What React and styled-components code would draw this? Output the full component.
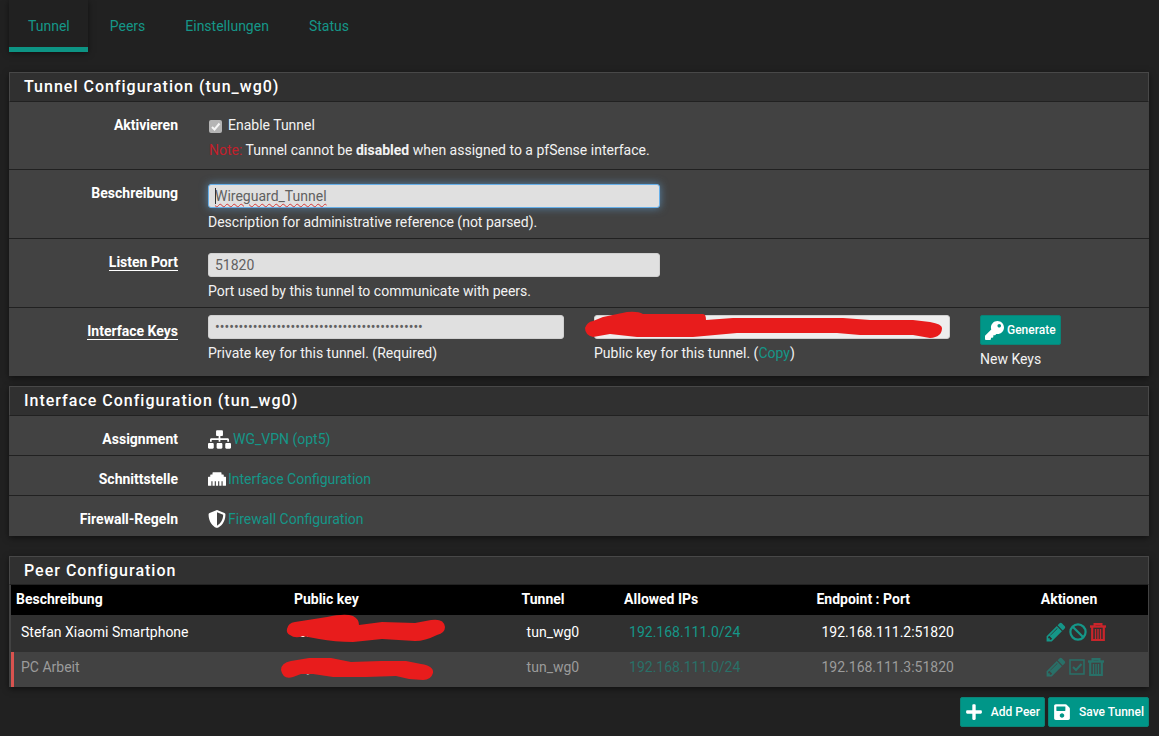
import React, { useState } from 'react';
import styled, { createGlobalStyle } from 'styled-components';
import { FaEthernet, FaKey, FaPlus, FaSave, FaShieldAlt, FaSitemap } from 'react-icons/fa';


const GlobalStyle = createGlobalStyle`
    *{box-sizing: border-box;}

    body{
        margin: 0;
        background: #212121;
        color: #f2f2f2;
        font-family: Roboto, "Liberation Sans", sans-serif;
        font-size: 14px;
        line-height: 20px;
    }

    a{color: #159688; text-decoration: none;}
`

const Page = styled.div`
    padding: 0 10px 0 9px;
`

const Tabs = styled.nav`
    display: flex;
    gap: 3px;
    height: 52px;
    margin-bottom: 20px;
`

const Tab = styled.a`
    display: block;
    padding: 16px 18px 0 19px;
    border-bottom: 5px solid ${(props) => (props.$active ? '#0d9484' : 'transparent')};
    box-shadow: ${(props) => (props.$active ? '0 1px 6px rgba(0, 0, 0, 0.5)' : 'none')};
`

const Panel = styled.section`
    margin-bottom: ${(props) => props.$gap || 10}px;
    background: #424242;
    box-shadow: 0 2px 6px rgba(0, 0, 0, 0.5);
`

const PanelTitle = styled.h2`
    height: ${(props) => props.$height || 30}px;
    margin: 0;
    padding: 4px 14px 0 14px;
    border: 1px solid #484848;
    border-bottom-color: #212121;
    background: #303030;
    color: #ffffff;
    font-size: 16px;
    font-weight: 500;
    line-height: 20px;
    letter-spacing: 1px;
`

const FormRow = styled.div`
    padding: ${(props) => (props.$small ? '9px 0 6px 0' : '7px 0 6px 0')};
    min-height: ${(props) => (props.$small ? 40 : 68)}px;
    border-bottom: 1px solid #212121;

    &:last-child{border-bottom: none;}
`

const Columns = styled.div`
    display: flex;
    align-items: flex-start;
    margin: 0 -9px;
`

const Label = styled.label`
    width: 16.6666%;
    padding: ${(props) => props.$top || 0}px 15px 0 15px;
    color: #ffffff;
    font-weight: 700;
    text-align: right;

    span{border-bottom: ${(props) => (props.$required ? '1px solid #ffffff' : 'none')};}
`

const Field = styled.div`
    width: ${(props) => (props.$cols * 100) / 12}%;
    padding: ${(props) => props.$top || 0}px 15px 0 15px;
`

const TextInput = styled.input`
    display: block;
    width: 100%;
    height: 24px;
    padding: 0 6px;
    border: 1px solid ${(props) => (props.$focus ? '#66afe9' : '#d0d0d0')};
    border-radius: 3px;
    outline: none;
    background: ${(props) => (props.readOnly ? '#eeeeee' : '#e0e0e0')};
    box-shadow: ${(props) => (props.$focus ? '0 0 8px rgba(102, 175, 233, 0.6)' : 'none')};
    color: #616161;
    font-family: inherit;
    font-size: 14px;
`

const Misspelled = styled.div`
    position: relative;

    &::before{
        content: '';
        position: absolute;
        top: 4px;
        left: 7px;
        width: 1px;
        height: 16px;
        background: #333333;
    }

    &::after{
        content: 'Wireguard_Tunnel';
        position: absolute;
        top: 2px;
        left: 7px;
        color: transparent;
        text-decoration: underline wavy #d33a3a 1px;
        text-underline-offset: 2px;
        pointer-events: none;
    }
`

const Help = styled.div`
    padding-top: 4px;
`

const CheckLabel = styled.label`
    display: flex;
    align-items: center;
    gap: 6px;
`

const Checkbox = styled.input`
    appearance: none;
    width: 13px;
    height: 13px;
    margin: 2px 0 0 1px;
    border-radius: 2px;
    background: #b4b4b4 url("data:image/svg+xml,%3Csvg xmlns='http://www.w3.org/2000/svg' viewBox='0 0 13 13'%3E%3Cpath d='M3 7l2.500 2.500L10.500 3.500' fill='none' stroke='%23f4f4f4' stroke-width='2'/%3E%3C/svg%3E");
`

const Note = styled.div`
    padding: 5px 0 0 1px;

    em{color: #c3202b; font-style: normal;}
`

const KeyBox = styled.div`
    position: relative;
`

const Scribble = styled.svg`
    position: absolute;
    top: ${(props) => props.$top}px;
    left: ${(props) => props.$left}px;
    overflow: visible;
    fill: #e81c1c;
    pointer-events: none;
`

const Button = styled.button`
    display: inline-flex;
    align-items: center;
    gap: ${(props) => props.$gap || 3}px;
    height: 30px;
    padding: 0 4px;
    border: 1px solid #0a8477;
    border-radius: 2px;
    background: #009688;
    color: #ffffff;
    font-family: inherit;
    font-size: 12px;
    font-weight: 500;
`

const IconLink = styled.div`
    display: flex;
    align-items: center;
    gap: 2px;
    height: 20px;

    svg{flex: none; color: #ffffff;}
`

const PeerTable = styled.table`
    width: 100%;
    border-collapse: collapse;
    table-layout: fixed;
    border-left: 2px solid #424242;
    border-right: 1px solid #424242;

    th{
        height: 30px;
        padding: 0 5px 2px 5px;
        background: #000000;
        color: #ffffff;
        font-weight: 700;
        text-align: left;
    }

    td{padding: 0 10px;}
`

const PeerRow = styled.tr`
    height: ${(props) => (props.$disabled ? 35 : 37)}px;
    background: ${(props) => (props.$disabled ? '#424242' : '#303030')};
    color: ${(props) => (props.$disabled ? '#9b9b9b' : '#ffffff')};

    td{padding-bottom: ${(props) => (props.$disabled ? 5 : 3)}px;}

    td:first-child{
        box-shadow: ${(props) => (props.$disabled ? 'inset 3px 0 0 #d9534f' : 'none')};
    }

    a, button{opacity: ${(props) => (props.$disabled ? 0.55 : 1)};}
`

const Actions = styled.div`
    display: flex;
    align-items: center;
    gap: 1px;
    height: 20px;
`

const IconButton = styled.button`
    display: flex;
    padding: 0;
    border: none;
    background: none;
    color: ${(props) => (props.$danger ? '#c9252b' : '#159688')};
`

const ButtonBar = styled.div`
    display: flex;
    justify-content: flex-end;
    gap: 3px;
`


const PencilIcon = () => (
    <svg width="21" height="22" viewBox="80 0 1710 1792" fill="currentColor">
        <path d="M491 1536l91-91-235-235-91 91v107h128v128h107zm523-928q0-22-22-22-10 0-17 7l-542 542q-7 7-7 17 0 22 22 22 10 0 17-7l542-542q7-7 7-17zm-54-192l416 416-832 832h-416v-416zm683 96q0 53-37 90l-166 166-416-416 166-165q36-38 90-38 53 0 91 38l235 234q37 39 37 91z" />
    </svg>
)

const BanIcon = () => (
    <svg width="20" height="20" viewBox="0 0 20 20" fill="none" stroke="currentColor" strokeWidth="2.200">
        <circle cx="10" cy="10" r="7.600" />
        <path d="M4.700 4.700l10.600 10.600" />
    </svg>
)

const CheckSquareIcon = () => (
    <svg width="18" height="20" viewBox="0 0 18 20" fill="none" stroke="currentColor">
        <rect x="2" y="3" width="14" height="14" strokeWidth="1.500" />
        <path d="M5 10l3 3 5.500-6" strokeWidth="2" />
    </svg>
)

const TrashIcon = () => (
    <svg width="18" height="20" viewBox="0 0 18 20" fill="none" stroke="currentColor">
        <path d="M1 4.500h16" strokeWidth="2.400" />
        <path d="M5.500 4V2h7v2" strokeWidth="2" />
        <path d="M3.200 5v13h11.600V5" strokeWidth="2.200" />
        <path d="M6.500 7v10M9 7v10M11.500 7v10" strokeWidth="1.400" />
    </svg>
)


const tabs = ['Tunnel', 'Peers', 'Einstellungen', 'Status'];

const interfaceLinks = [
    { label: 'Assignment', text: 'WG_VPN (opt5)', icon: <FaSitemap size={23} /> },
    { label: 'Schnittstelle', text: 'Interface Configuration', icon: <FaEthernet size={18} /> },
    { label: 'Firewall-Regeln', text: 'Firewall Configuration', icon: <FaShieldAlt size={18} /> },
];

const peers = [
    {
        name: 'Stefan Xiaomi Smartphone', keyStart: 'sk', ips: '192.168.111.0/24', endpoint: '192.168.111.2:51820', disabled: false,
        mark: 'M0 15Q1 9 8 8L40 3Q58-1 66 2Q72 5 72 11L95 8L128 9L144 6Q157 4 158 13Q158 19 150 21Q138 27 128 27L95 25L66 28Q48 28 32 25L16 22Q8 25 3 21Q-1 19 0 15z',
        top: -8, left: -12,
    },
    {
        name: 'PC Arbeit', keyStart: 'ey', ips: '192.168.111.0/24', endpoint: '192.168.111.3:51820', disabled: true,
        mark: 'M0 14Q0 7 10 5L28 2L50 2L70 6L100 5L125 5L140 8Q153 10 152 17Q150 24 142 24L128 23L115 20L85 21L52 21L32 18L20 18L12 21Q2 24 0 14z',
        top: -1, left: -18,
    },
];


function TunnelPanel() {

    const [description, setDescription] = useState('Wireguard_Tunnel');
    const [port, setPort] = useState('51820');

    return (
        <Panel>
            <PanelTitle>Tunnel Configuration (tun_wg0)</PanelTitle>
            <FormRow>
                <Columns>
                    <Label htmlFor="enable" $top={6}>Aktivieren</Label>
                    <Field $cols={10} $top={6}>
                        <CheckLabel>
                            <Checkbox id="enable" type="checkbox" defaultChecked disabled />
                            Enable Tunnel
                        </CheckLabel>
                        <Note><em>Note:</em> Tunnel cannot be <b>disabled</b> when assigned to a pfSense interface.</Note>
                    </Field>
                </Columns>
            </FormRow>
            <FormRow>
                <Columns>
                    <Label htmlFor="description" $top={6}>Beschreibung</Label>
                    <Field $cols={5} $top={7}>
                        <Misspelled>
                            <TextInput id="description" $focus value={description} onChange={(e) => setDescription(e.target.value)} />
                        </Misspelled>
                        <Help>Description for administrative reference (not parsed).</Help>
                    </Field>
                </Columns>
            </FormRow>
            <FormRow>
                <Columns>
                    <Label htmlFor="port" $top={6} $required><span>Listen Port</span></Label>
                    <Field $cols={5} $top={7}>
                        <TextInput id="port" value={port} onChange={(e) => setPort(e.target.value)} />
                        <Help>Port used by this tunnel to communicate with peers.</Help>
                    </Field>
                </Columns>
            </FormRow>
            <FormRow>
                <Columns>
                    <Label htmlFor="privatekey" $top={6} $required><span>Interface Keys</span></Label>
                    <Field $cols={4}>
                        <TextInput id="privatekey" type="password" defaultValue={'x'.repeat(44)} />
                        <Help>Private key for this tunnel. (Required)</Help>
                    </Field>
                    <Field $cols={4}>
                        <KeyBox>
                            <TextInput aria-label="Public key" readOnly />
                            <Scribble $top={0} $left={-9} width="358" height="24">
                                <path d="M0 13Q2 7 8 6L18 2L42-3Q53-4 58-1L118-1Q121-1 121 5L148 3H258L285 5H328L345 7Q357 9 357 13Q357 22 345 23L328 20H275L252 18H152L108 22L52 22L25 19L8 22Q0 20 0 13z" />
                            </Scribble>
                        </KeyBox>
                        <Help>Public key for this tunnel. (<a href="#copy">Copy</a>)</Help>
                    </Field>
                    <Field $cols={2}>
                        <Button type="button"><FaKey size={19} />Generate</Button>
                        <Help>New Keys</Help>
                    </Field>
                </Columns>
            </FormRow>
        </Panel>
    );
}

function InterfacePanel() {

    return (
        <Panel $gap={20}>
            <PanelTitle>Interface Configuration (tun_wg0)</PanelTitle>
            {interfaceLinks.map((item) => (
                <FormRow key={item.label} $small>
                    <Columns>
                        <Label as="div" $top={4}>{item.label}</Label>
                        <Field $cols={10} $top={4}>
                            <IconLink>{item.icon}<a href="#interface">{item.text}</a></IconLink>
                        </Field>
                    </Columns>
                </FormRow>
            ))}
        </Panel>
    );
}

function PeerPanel() {

    return (
        <Panel>
            <PanelTitle $height={29}>Peer Configuration</PanelTitle>
            <PeerTable>
                <colgroup>
                    <col style={{ width: '24.5%' }} />
                    <col style={{ width: '20%' }} />
                    <col style={{ width: '9%' }} />
                    <col style={{ width: '16.9%' }} />
                    <col style={{ width: '19.7%' }} />
                    <col />
                </colgroup>
                <thead>
                    <tr>
                        <th>Beschreibung</th>
                        <th>Public key</th>
                        <th>Tunnel</th>
                        <th>Allowed IPs</th>
                        <th>Endpoint : Port</th>
                        <th>Aktionen</th>
                    </tr>
                </thead>
                <tbody>
                    {peers.map((peer) => (
                        <PeerRow key={peer.name} $disabled={peer.disabled}>
                            <td>{peer.name}</td>
                            <td>
                                <KeyBox>
                                    {peer.keyStart}
                                    <Scribble $top={peer.top} $left={peer.left} width="160" height="28">
                                        <path d={peer.mark} />
                                    </Scribble>
                                </KeyBox>
                            </td>
                            <td>tun_wg0</td>
                            <td><a href="#alias">{peer.ips}</a></td>
                            <td>{peer.endpoint}</td>
                            <td>
                                <Actions>
                                    <IconButton aria-label="Edit"><PencilIcon /></IconButton>
                                    <IconButton aria-label="Toggle">{peer.disabled ? <CheckSquareIcon /> : <BanIcon />}</IconButton>
                                    <IconButton aria-label="Delete" $danger={!peer.disabled}><TrashIcon /></IconButton>
                                </Actions>
                            </td>
                        </PeerRow>
                    ))}
                </tbody>
            </PeerTable>
        </Panel>
    );
}

function App() {

    return (
        <Page>
            <GlobalStyle />
            <Tabs>
                {tabs.map((name, i) => <Tab key={name} href="#tab" $active={i === 0}>{name}</Tab>)}
            </Tabs>
            <TunnelPanel />
            <InterfacePanel />
            <PeerPanel />
            <ButtonBar>
                <Button type="button" $gap={8}><FaPlus size={18} />Add Peer</Button>
                <Button type="button" $gap={8}><FaSave size={18} />Save Tunnel</Button>
            </ButtonBar>
        </Page>
    );
}

export default App;
